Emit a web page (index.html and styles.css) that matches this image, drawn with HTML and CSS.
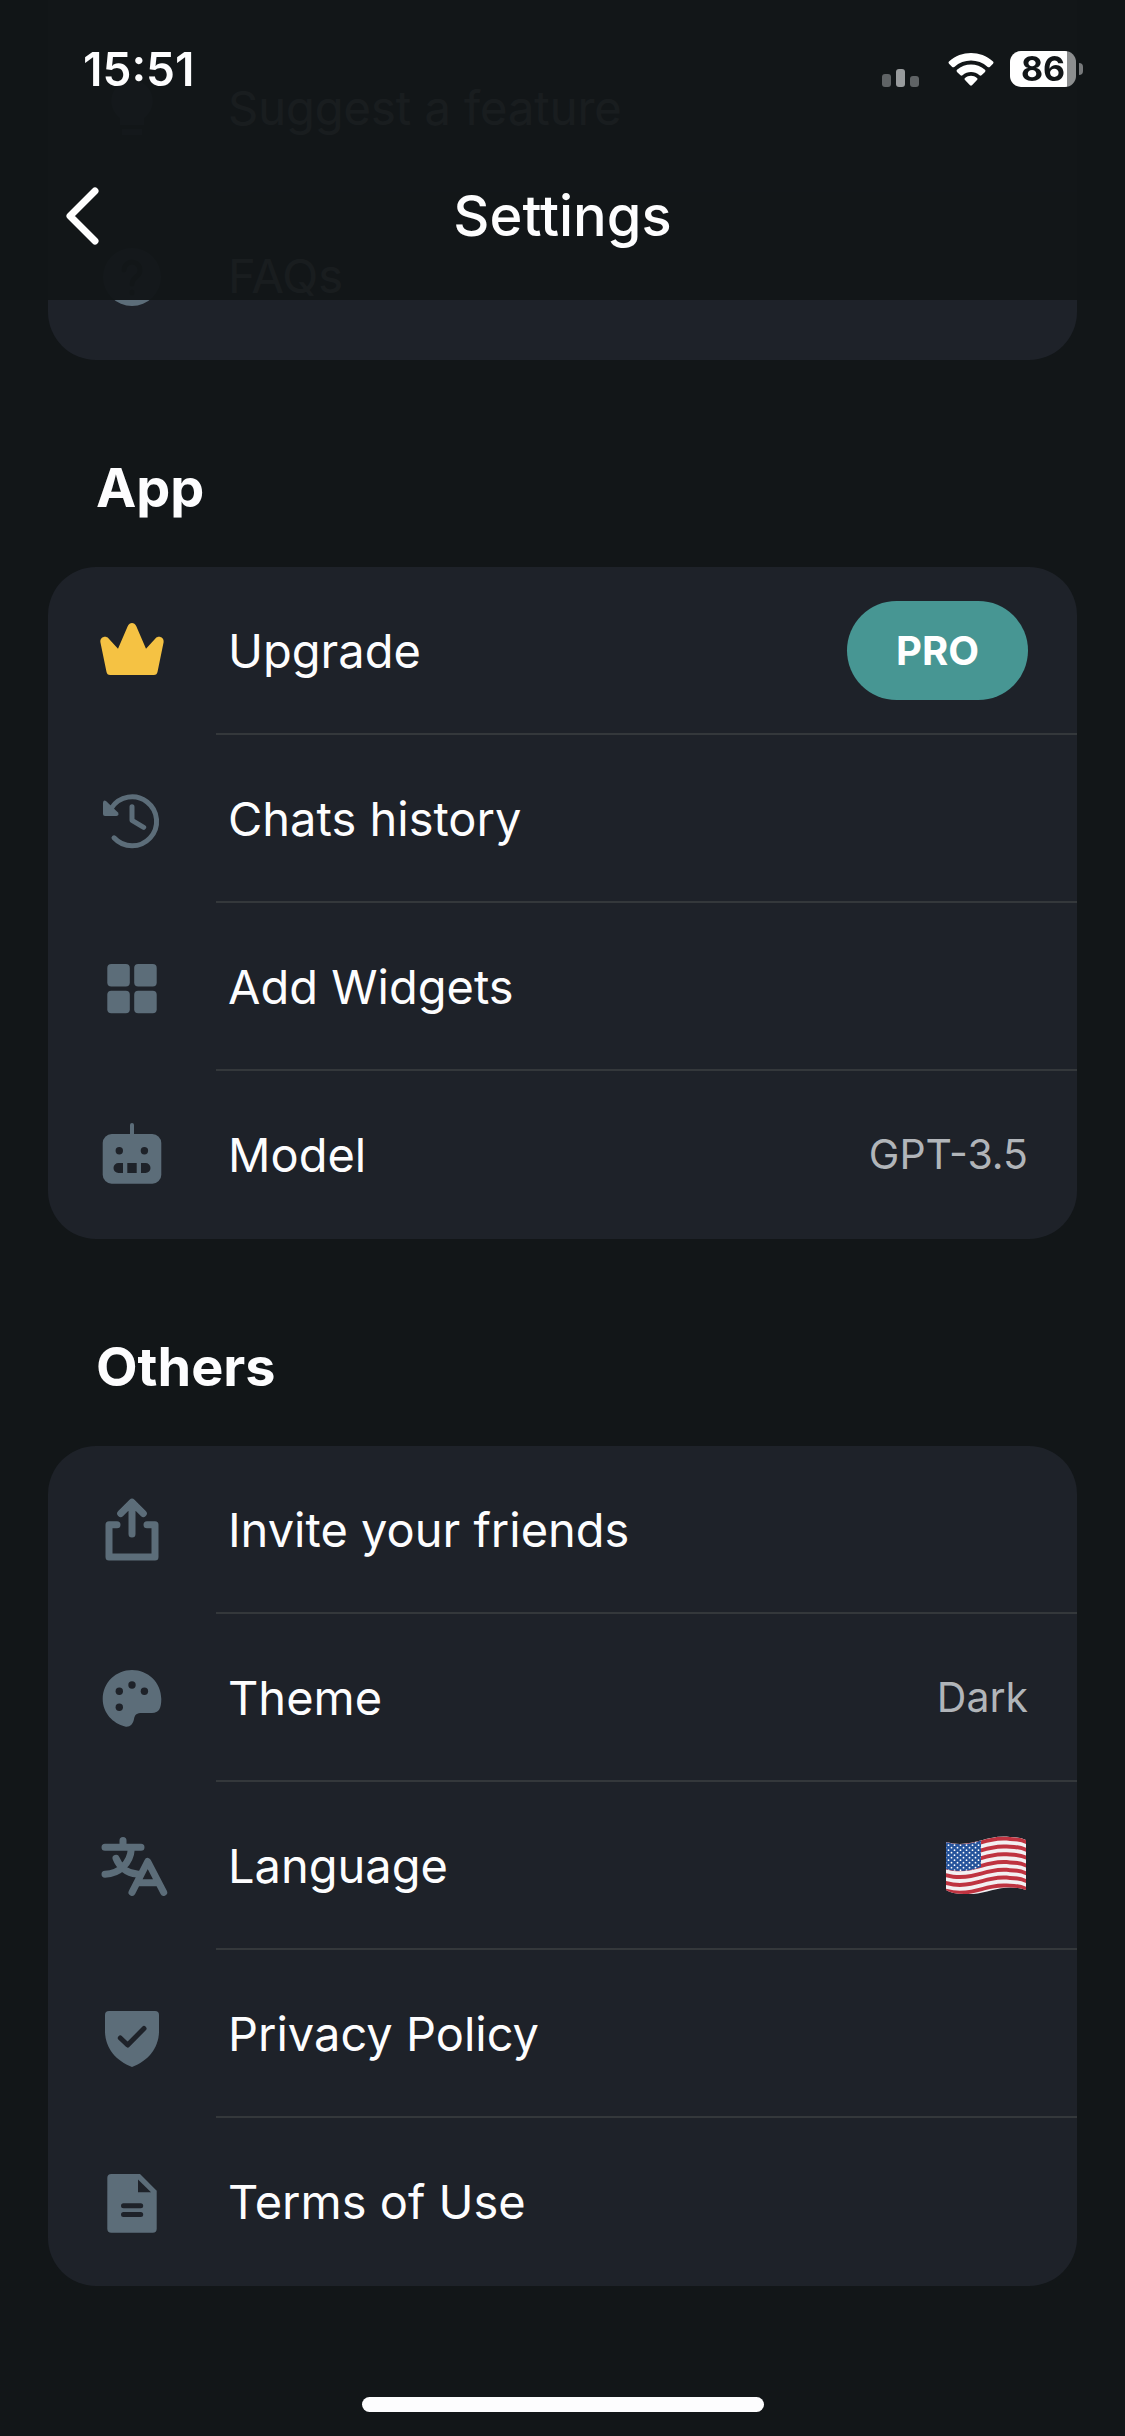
FILE: index.html
```html
<!DOCTYPE html>
<html lang="en">
<head>
    <meta charset="UTF-8">
    <meta name="viewport" content="width=device-width, initial-scale=1.0">
    <title>Settings</title>
    <link rel="stylesheet" href="styles.css">
</head>
<body>
    <header class="header">
        <div class="status-bar">
            <span class="time">15:51</span>
            <div class="status-icons">
                <svg class="signal" viewBox="0 0 38 18" aria-hidden="true">
                    <rect x="0" y="5" width="9" height="13" rx="3" fill="#5f6365"/>
                    <rect x="14" y="0" width="9" height="18" rx="3" fill="#989b9d"/>
                    <rect x="28" y="7" width="9" height="11" rx="3" fill="#5f6365"/>
                </svg>
                <svg class="wifi" viewBox="0 0 46 33" aria-hidden="true">
                    <path d="M1 8.500C13.500-2.800 32.500-2.800 45 8.500Q46 9.600 45 10.700L41.800 13.900Q40.800 14.800 39.700 13.900C30 5.500 16 5.500 6.300 13.900Q5.200 14.800 4.200 13.900L1 10.700Q0 9.600 1 8.500Z"/>
                    <path d="M9 16.800C17 9.800 29 9.800 37 16.800Q38 17.900 37 18.900L33.500 22.300Q32.500 23 31.500 22.300C26.500 18 19.500 18 14.500 22.300Q13.500 23 12.500 22.300L9 18.900Q8 17.900 9 16.800Z"/>
                    <path d="M17 25C20.500 22 25.500 22 29 25Q30 26 29 27L24 32.300Q23 33.200 22 32.300L17 27Q16 26 17 25Z"/>
                </svg>
                <span class="battery">86</span>
            </div>
        </div>
        <nav class="nav">
            <button class="back" type="button" aria-label="Back">
                <svg viewBox="0 0 36 60" aria-hidden="true">
                    <path d="M31 5L6 30L31 55"/>
                </svg>
            </button>
            <h1>Settings</h1>
        </nav>
    </header>

    <main class="content">
        <ul class="card card-top">
            <li class="row">
                <svg class="icon" viewBox="0 0 66 66" aria-hidden="true">
                    <path d="M33 5a21 21 0 0 0-12 38v7h24v-7A21 21 0 0 0 33 5zM23 54h20v6H23z"/>
                </svg>
                <div class="row-body"><a href="#" class="label">Suggest a feature</a></div>
            </li>
            <li class="row">
                <svg class="icon" viewBox="0 0 66 66" aria-hidden="true">
                    <circle cx="33" cy="34" r="29"/>
                    <path class="cut-line" d="M25 27a8 8 0 1 1 12 7q-4 3-4 7M33 49v1"/>
                </svg>
                <div class="row-body"><a href="#" class="label">FAQs</a></div>
            </li>
        </ul>

        <h2>App</h2>
        <ul class="card">
            <li class="row">
                <svg class="icon icon-crown" viewBox="0 0 66 66" aria-hidden="true">
                    <path d="M1.400 24.200C.6 19.500 6.400 17 9.600 20.400L19 30.700L28.800 8C30.600 4 35.400 4 37.200 8L47 30.700L56.400 20.400C59.600 17 65.400 19.500 64.600 24.200L58.600 53.500C58.200 56 57 57 54.800 57H11.200C9 57 7.800 56 7.400 53.500Z"/>
                </svg>
                <div class="row-body">
                    <a href="#" class="label">Upgrade</a>
                    <button class="btn-pro" type="button">PRO</button>
                </div>
            </li>
            <li class="row">
                <svg class="icon" viewBox="0 0 66 66" aria-hidden="true">
                    <path class="line thin" d="M15 51.800A24.500 24.500 0 1 0 12.500 22M33 20.700V34.300L44.700 41.300"/>
                    <path d="M4 16.500Q4.500 13.500 7 15L19 26.500Q20.500 29.500 17.500 30H6Q4 30 4 28Z"/>
                </svg>
                <div class="row-body"><a href="#" class="label">Chats history</a></div>
            </li>
            <li class="row">
                <svg class="icon" viewBox="0 0 66 66" aria-hidden="true">
                    <rect x="8.300" y="10" width="22.500" height="22.500" rx="4"/>
                    <rect x="35.200" y="10" width="22.500" height="22.500" rx="4"/>
                    <rect x="8.300" y="36.700" width="22.500" height="22.500" rx="4"/>
                    <rect x="35.200" y="36.700" width="22.500" height="22.500" rx="4"/>
                </svg>
                <div class="row-body"><a href="#" class="label">Add Widgets</a></div>
            </li>
            <li class="row">
                <svg class="icon" viewBox="0 0 66 66" aria-hidden="true">
                    <rect x="31" y="1" width="4" height="16" rx="2"/>
                    <rect x="3.700" y="12" width="58.600" height="49.700" rx="9"/>
                    <circle class="cut" cx="20.300" cy="28.700" r="3.700"/>
                    <circle class="cut" cx="45.400" cy="28.700" r="3.700"/>
                    <path class="cut" d="M24 41v10h-4.500a5 5 0 0 1 0-10zM28.300 41h9.400v10h-9.400zM42 41h4.500a5 5 0 0 1 0 10H42z"/>
                </svg>
                <div class="row-body">
                    <a href="#" class="label">Model</a>
                    <span class="value">GPT-3.5</span>
                </div>
            </li>
        </ul>

        <h2>Others</h2>
        <ul class="card">
            <li class="row">
                <svg class="icon" viewBox="0 0 66 66" aria-hidden="true">
                    <path class="line" d="M18 27.700H10V60H56V27.700H48M33 6V37M21.700 16.500L33 5.200L44.300 16.500"/>
                </svg>
                <div class="row-body"><a href="#" class="label">Invite your friends</a></div>
            </li>
            <li class="row">
                <svg class="icon" viewBox="0 0 66 66" aria-hidden="true">
                    <path d="M3.700 34C3.700 17.500 17 5 33 5S62.300 17.500 62.300 34C62.300 43 60 48 53 48H43C38 48 35.800 49.500 35 54C34 59.500 30.500 62.500 26 61.500C14 58.500 3.700 48 3.700 34Z"/>
                    <circle class="cut" cx="20.300" cy="26.300" r="3.700"/>
                    <circle class="cut" cx="33" cy="20" r="3.700"/>
                    <circle class="cut" cx="45.400" cy="26.300" r="3.700"/>
                    <circle class="cut" cx="20.300" cy="42.300" r="3.700"/>
                </svg>
                <div class="row-body">
                    <a href="#" class="label">Theme</a>
                    <span class="value">Dark</span>
                </div>
            </li>
            <li class="row">
                <svg class="icon" viewBox="0 0 66 66" aria-hidden="true">
                    <path class="line" d="M6 14.300H42M24 7.500V14M32.300 16C31.500 29 21 41 6 41.300M17 25.300C20 33 27 40 38 41M33 59.300L48.700 28.500L64.700 59.300M38.500 49.700H59"/>
                </svg>
                <div class="row-body">
                    <a href="#" class="label">Language</a>
                    <svg class="flag" viewBox="0 0 84 58" role="img" aria-label="United States">
                        <defs>
                            <clipPath id="flag-shape">
                                <path d="M2 6C28 13 42-2 66 1Q76 1 82 4V54C58 46 42 60 20 58Q8 58 2 54Z"/>
                            </clipPath>
                            <path id="stripe" d="M2 6C28 13 42-2 66 1Q76 1 82 4V8Q76 5 66 5C42 2 28 17 2 10Z"/>
                            <pattern id="stars" x="3" y="8" width="6" height="5" patternUnits="userSpaceOnUse">
                                <circle cx="1.500" cy="1.200" r=".9" fill="#fff"/>
                                <circle cx="4.500" cy="3.700" r=".9" fill="#fff"/>
                            </pattern>
                        </defs>
                        <g clip-path="url(#flag-shape)">
                            <rect width="84" height="58" fill="#f3f0f2"/>
                            <g fill="#bf3340">
                                <use href="#stripe"/>
                                <use href="#stripe" y="7.800"/>
                                <use href="#stripe" y="15.600"/>
                                <use href="#stripe" y="23.400"/>
                                <use href="#stripe" y="31.200"/>
                                <use href="#stripe" y="39"/>
                                <use href="#stripe" y="46.800"/>
                            </g>
                            <path d="M2 6C16 10 26 8 37 4.500V31C26 35 14 36.500 2 33Z" fill="#25539b"/>
                            <path d="M2 6C16 10 26 8 37 4.500V31C26 35 14 36.500 2 33Z" fill="url(#stars)"/>
                        </g>
                    </svg>
                </div>
            </li>
            <li class="row">
                <svg class="icon" viewBox="0 0 66 66" aria-hidden="true">
                    <path d="M10 10H56Q60 10 60 14V30C60 47 49 60 33 66C17 60 6 47 6 30V14Q6 10 10 10Z"/>
                    <path class="cut-line" d="M21.300 37L28.700 44L45 27.500"/>
                </svg>
                <div class="row-body"><a href="#" class="label">Privacy Policy</a></div>
            </li>
            <li class="row">
                <svg class="icon" viewBox="0 0 66 66" aria-hidden="true">
                    <path d="M12.300 5H41L57.700 21.700V59.700Q57.700 63.700 53.700 63.700H12.300Q8.300 63.700 8.300 59.700V9Q8.300 5 12.300 5Z"/>
                    <path class="cut" d="M39 10.500V23.300H52Z"/>
                    <path class="cut-line" d="M24.500 36.700H41.700M24.500 45.500H41.700"/>
                </svg>
                <div class="row-body"><a href="#" class="label">Terms of Use</a></div>
            </li>
        </ul>
    </main>

    <div class="home-indicator"></div>
</body>
</html>
```
FILE: styles.css
```css
* {
    margin: 0;
    padding: 0;
    box-sizing: border-box;
}

body {
    font-family: Inter, 'Liberation Sans', sans-serif;
    background: #121618;
    color: #fdfdfe;
    min-height: 100vh;
    display: flex;
    flex-direction: column;
}

/* Header stays over the scrolled list, which shows through slightly */
.header {
    position: fixed;
    top: 0;
    left: 0;
    right: 0;
    z-index: 10;
    padding-bottom: 6px;
    background: rgba(18, 22, 24, 0.97);
}

.status-bar {
    height: 138px;
    padding: 0 49px 0 83px;
    display: flex;
    align-items: center;
    justify-content: space-between;
}

.time {
    font-size: 46px;
    font-weight: 600;
}

.status-icons {
    display: flex;
    align-items: center;
    gap: 16px;
}

.signal {
    width: 38px;
    height: 18px;
    margin-right: 12px;
    margin-top: 18px;
}

.wifi {
    width: 46px;
    height: 33px;
    fill: #fff;
}

.battery {
    position: relative;
    width: 66px;
    height: 36px;
    border-radius: 11px;
    background: linear-gradient(to right, #fff 86%, #8c8e8f 86%);
    color: #121618;
    font-size: 34px;
    font-weight: 700;
    line-height: 36px;
    text-align: center;
}

.battery::after {
    content: "";
    position: absolute;
    top: 12px;
    right: -7px;
    width: 4px;
    height: 12px;
    border-radius: 0 4px 4px 0;
    background: #77797b;
}

.nav {
    height: 156px;
    padding: 0 64px;
    display: grid;
    grid-template-columns: 36px 1fr 36px;
    align-items: center;
}

.back {
    height: 60px;
    border: none;
    background: none;
    cursor: pointer;
}

.back svg {
    display: block;
    width: 36px;
    height: 60px;
    fill: none;
    stroke: #fff;
    stroke-width: 7;
    stroke-linecap: round;
    stroke-linejoin: round;
}

h1 {
    font-size: 56px;
    font-weight: 500;
    text-align: center;
}

.content {
    padding: 0 48px;
}

h2 {
    margin: 96px 0 47px;
    padding-left: 48px;
    font-size: 54px;
    font-weight: 700;
    line-height: 64px;
}

.card {
    list-style: none;
    background: #1e2229;
    border-radius: 48px;
    overflow: hidden;
}

.card-top {
    padding-top: 24px;
    border-radius: 0 0 48px 48px;
}

.row {
    display: flex;
    align-items: center;
    padding-left: 51px;
}

.icon {
    flex: none;
    width: 66px;
    height: 66px;
    margin-right: 51px;
    overflow: visible;
    fill: #5c6d79;
}

.icon-crown {
    fill: #f5c243;
}

.icon .line {
    fill: none;
    stroke: #5c6d79;
    stroke-width: 7;
    stroke-linecap: round;
    stroke-linejoin: round;
}

.icon .thin {
    stroke-width: 5;
}

.icon .cut {
    fill: #1e2229;
}

.icon .cut-line {
    fill: none;
    stroke: #1e2229;
    stroke-width: 5;
    stroke-linecap: round;
    stroke-linejoin: round;
}

.row-body {
    flex: 1;
    min-height: 168px;
    padding: 0 49px 0 12px;
    display: flex;
    align-items: center;
    justify-content: space-between;
    border-bottom: 2px solid #34383b;
}

.row:last-child .row-body {
    border-bottom-color: transparent;
}

.label {
    color: inherit;
    font-size: 47px;
    text-decoration: none;
}

.value {
    color: #b1b5b9;
    font-size: 41px;
}

.btn-pro {
    height: 99px;
    padding: 0 49px;
    border: none;
    border-radius: 50px;
    background: #479693;
    color: #fff;
    font-family: inherit;
    font-size: 40px;
    font-weight: 700;
    cursor: pointer;
}

.flag {
    width: 84px;
    height: 58px;
}

.home-indicator {
    width: 402px;
    height: 15px;
    margin: auto auto 24px;
    border-radius: 8px;
    background: #fdfdfe;
}
```
